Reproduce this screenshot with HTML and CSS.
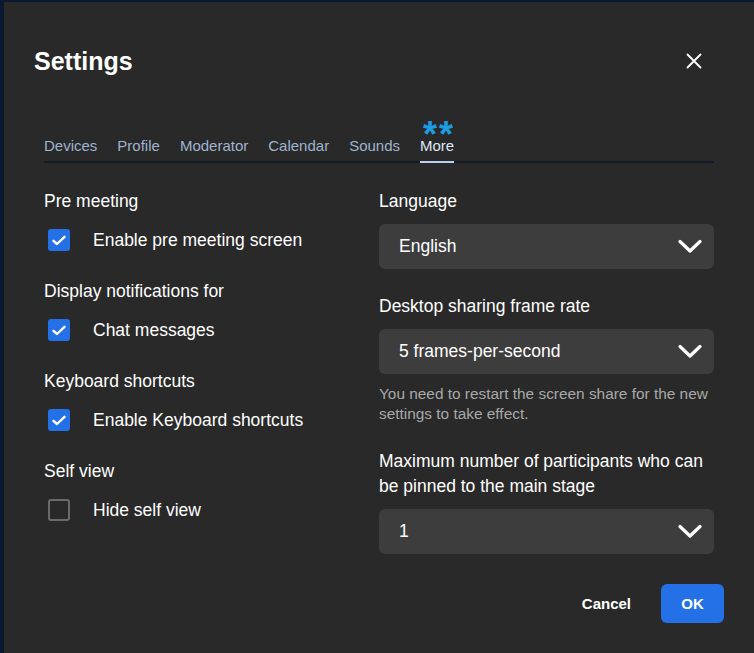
FILE: index.html
```html
<!DOCTYPE html>
<html lang="en">
<head>
<meta charset="utf-8">
<title>Settings</title>
<link rel="stylesheet" href="styles.css">
</head>
<body>
<div class="dialog">
  <div class="header">
    <h1 class="title">Settings</h1>
    <button class="close" aria-label="Close">
      <svg width="16" height="16" viewBox="0 0 16 16"><path d="M1.5 1.5 L14.5 14.5 M14.5 1.5 L1.5 14.5" stroke="#ffffff" stroke-width="1.8" stroke-linecap="round"/></svg>
    </button>
  </div>
  <div class="tabs">
    <div class="tab">Devices</div>
    <div class="tab">Profile</div>
    <div class="tab">Moderator</div>
    <div class="tab">Calendar</div>
    <div class="tab">Sounds</div>
    <div class="tab active">More<span class="stars">**</span></div>
  </div>
  <div class="content">
    <div class="col-left">
      <div class="section">
        <div class="label">Pre meeting</div>
        <div class="check-row"><span class="checkbox checked"><svg width="14" height="11" viewBox="0 0 14 11"><path d="M1.5 5.8 L5 9 L12.5 1.8" fill="none" stroke="#fff" stroke-width="2.4" stroke-linecap="round" stroke-linejoin="round"/></svg></span><span class="check-label">Enable pre meeting screen</span></div>
      </div>
      <div class="section">
        <div class="label">Display notifications for</div>
        <div class="check-row"><span class="checkbox checked"><svg width="14" height="11" viewBox="0 0 14 11"><path d="M1.5 5.8 L5 9 L12.5 1.8" fill="none" stroke="#fff" stroke-width="2.4" stroke-linecap="round" stroke-linejoin="round"/></svg></span><span class="check-label">Chat messages</span></div>
      </div>
      <div class="section">
        <div class="label">Keyboard shortcuts</div>
        <div class="check-row"><span class="checkbox checked"><svg width="14" height="11" viewBox="0 0 14 11"><path d="M1.5 5.8 L5 9 L12.5 1.8" fill="none" stroke="#fff" stroke-width="2.4" stroke-linecap="round" stroke-linejoin="round"/></svg></span><span class="check-label">Enable Keyboard shortcuts</span></div>
      </div>
      <div class="section">
        <div class="label">Self view</div>
        <div class="check-row"><span class="checkbox"></span><span class="check-label">Hide self view</span></div>
      </div>
    </div>
    <div class="col-right">
      <div class="label">Language</div>
      <div class="select"><span>English</span><svg class="chev" width="24" height="15" viewBox="0 0 24 15"><path d="M2 2.5 L12 12 L22 2.5" fill="none" stroke="#fff" stroke-width="3.2" stroke-linecap="round" stroke-linejoin="round"/></svg></div>
      <div class="label gap">Desktop sharing frame rate</div>
      <div class="select"><span>5 frames-per-second</span><svg class="chev" width="24" height="15" viewBox="0 0 24 15"><path d="M2 2.5 L12 12 L22 2.5" fill="none" stroke="#fff" stroke-width="3.2" stroke-linecap="round" stroke-linejoin="round"/></svg></div>
      <div class="help">You need to restart the screen share for the new settings to take effect.</div>
      <div class="label gap2 two">Maximum number of participants who can be pinned to the main stage</div>
      <div class="select s3"><span>1</span><svg class="chev" width="24" height="15" viewBox="0 0 24 15"><path d="M2 2.5 L12 12 L22 2.5" fill="none" stroke="#fff" stroke-width="3.2" stroke-linecap="round" stroke-linejoin="round"/></svg></div>
    </div>
  </div>
  <div class="footer">
    <button class="btn cancel">Cancel</button>
    <button class="btn ok">OK</button>
  </div>
</div>
</body>
</html>
```

FILE: styles.css
```css
* { box-sizing: border-box; }
html, body { margin: 0; padding: 0; }
body {
  background: #0a1830;
  font-family: "Liberation Sans", Arial, sans-serif;
  color: #ffffff;
  width: 754px;
  height: 653px;
  overflow: hidden;
}
.dialog {
  margin: 2px 0 0 4px;
  width: 760px;
  height: 660px;
  background: #292929;
  display: flex;
  flex-direction: column;
}
.header {
  display: flex;
  justify-content: space-between;
  align-items: center;
  padding: 43px 0 0 30px;
  width: 750px;
}
.title {
  margin: 0;
  font-size: 25px;
  line-height: 32px;
  font-weight: bold;
  color: #ffffff;
}
.close {
  background: none;
  border: none;
  padding: 0;
  margin-right: 52px;
  width: 16px;
  height: 16px;
  display: flex;
}
.tabs {
  margin: 59px 0 0 40px;
  width: 670px;
  display: flex;
  gap: 20px;
  border-bottom: 2px solid #141b28;
}
.tab {
  position: relative;
  font-size: 15px;
  line-height: 20px;
  color: #9fb3cf;
  padding-bottom: 5px;
  border-bottom: 2px solid transparent;
  margin-bottom: -2px;
}
.tab.active {
  color: #dce7f7;
  border-bottom-color: #b8d0f2;
}
.stars {
  position: absolute;
  left: 3px;
  top: -11px;
  font-size: 36px;
  line-height: 20px;
  font-weight: bold;
  color: #1b9de2;
  letter-spacing: 2px;
  white-space: nowrap;
}
.content {
  margin: 26px 0 0 40px;
  width: 670px;
  display: grid;
  grid-template-columns: 1fr 1fr;
}
.label {
  font-size: 17.5px;
  line-height: 24px;
  color: #ffffff;
}
.section { margin-bottom: 28px; }
.check-row {
  margin-top: 16px;
  display: flex;
  align-items: center;
  height: 22px;
}
.checkbox {
  width: 22px;
  height: 22px;
  margin-left: 4px;
  margin-right: 23px;
  border-radius: 3px;
  border: 2px solid #6a6a6a;
  display: flex;
  align-items: center;
  justify-content: center;
}
.checkbox.checked {
  background: #2470e6;
  border-color: #2470e6;
}
.check-label {
  font-size: 17.5px;
  line-height: 22px;
  color: #ffffff;
}
.select {
  margin-top: 11px;
  height: 45px;
  background: #3d3d3d;
  border-radius: 6px;
  display: flex;
  align-items: center;
  justify-content: space-between;
  padding: 0 12px 0 20px;
  font-size: 17.5px;
  color: #ffffff;
}
.label.gap { margin-top: 25px; }
.label.gap2 { margin-top: 26px; }
.label.two { line-height: 25px; }
.select.s3 { margin-top: 10px; }
.help {
  margin-top: 10px;
  font-size: 15.4px;
  line-height: 19.5px;
  color: #a8a8a8;
}
.footer {
  margin-top: 30px;
  width: 720px;
  display: flex;
  justify-content: flex-end;
  gap: 10px;
}
.btn {
  font-family: "Liberation Sans", Arial, sans-serif;
  font-size: 15px;
  font-weight: bold;
  height: 39px;
  border: none;
  border-radius: 6px;
  color: #ffffff;
  padding: 0 20px;
}
.cancel { background: transparent; }
.ok { background: #2470e6; width: 63px; padding: 0; }
```
